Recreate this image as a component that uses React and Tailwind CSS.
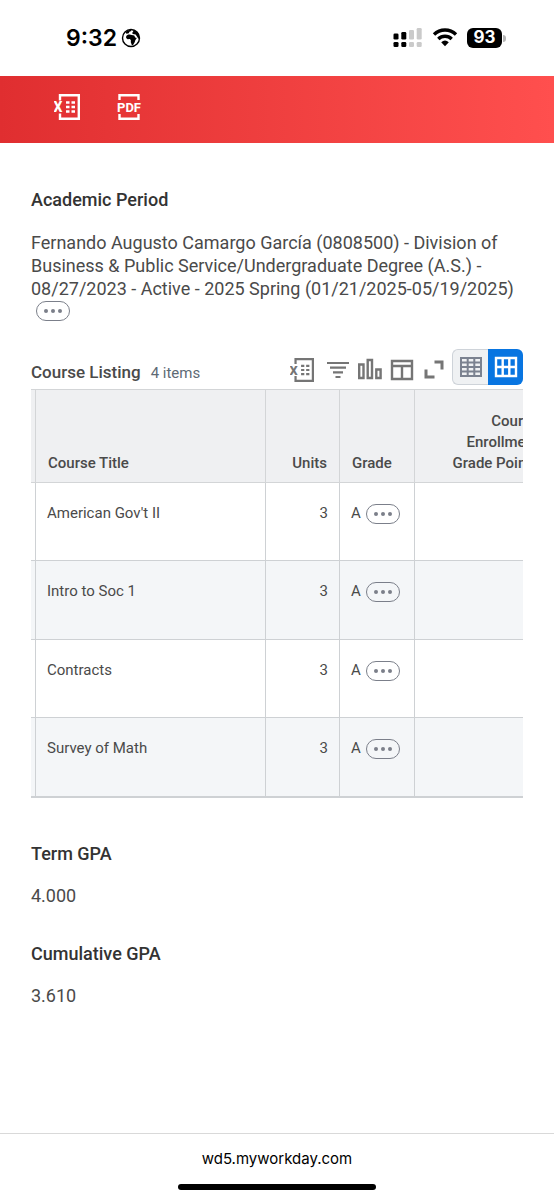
import React from 'react'
import { useState } from 'react';

const courses = [
    { title: "American Gov't II", units: 3, grade: 'A' },
    { title: 'Intro to Soc 1', units: 3, grade: 'A' },
    { title: 'Contracts', units: 3, grade: 'A' },
    { title: 'Survey of Math', units: 3, grade: 'A' },
];

function ExcelIcon({ className }) {
    return (
        <svg viewBox="0 0 26 26" className={className} fill="none" stroke="currentColor" strokeWidth="2.4">
            <path d="M6 6.500V1.200h18.800v23.600H6v-5.300" />
            <path d="M12 8.500h3.500M17.500 8.500H21M12 13h3.500M17.500 13H21M12 17.500h3.500M17.500 17.500H21" />
            <text x="-0.500" y="18" fontSize="14" fontWeight="800" fill="currentColor" stroke="none">X</text>
        </svg>
    )
}

function PdfIcon({ className }) {
    return (
        <svg viewBox="0 0 26 26" className={className} fill="none" stroke="currentColor" strokeWidth="2.4">
            <path d="M3.500 6V1.200h19V6M3.500 20v4.800h19V20" />
            <text x="13" y="17.500" fontSize="13" fontWeight="700" textAnchor="middle" fill="currentColor" stroke="none">PDF</text>
        </svg>
    )
}

function FilterIcon({ className }) {
    return (
        <svg viewBox="0 0 24 24" className={className} fill="none" stroke="currentColor" strokeWidth="2.2">
            <path d="M1 5h22M4 9.700h16M7 14.300h10M9.500 19h5" />
        </svg>
    )
}

function ChartIcon({ className }) {
    return (
        <svg viewBox="0 0 24 24" className={className} fill="none" stroke="currentColor" strokeWidth="2.4">
            <path d="M1.200 6.500h4.300V20H1.200zM9.700 2H14v18H9.700zM18.300 11.500h4.300V20h-4.300z" />
        </svg>
    )
}

function ColumnsIcon({ className }) {
    return (
        <svg viewBox="0 0 24 24" className={className} fill="none" stroke="currentColor" strokeWidth="2.4">
            <path d="M2 3h20v18H2zM2 8h20M12 8v13" />
        </svg>
    )
}

function ExpandIcon({ className }) {
    return (
        <svg viewBox="0 0 24 24" className={className} fill="none" stroke="currentColor" strokeWidth="3">
            <path d="M12.500 4h7.500v7.500M4 11.500V19h8.500" />
        </svg>
    )
}

function GridIcon({ className }) {
    return (
        <svg viewBox="0 0 24 24" className={className} fill="none" stroke="currentColor" strokeWidth="2">
            <path d="M2 3h20v18H2zM2 7.500h20M2 12h20M2 16.500h20M8.700 3v18M15.300 3v18" />
        </svg>
    )
}

function WideGridIcon({ className }) {
    return (
        <svg viewBox="0 0 24 24" className={className} fill="none" stroke="currentColor" strokeWidth="2.400">
            <path d="M2 3h20v18H2zM2 12h20M8.700 3v18M15.300 3v18" />
        </svg>
    )
}

function RelatedActions({ label }) {
    return (
        <button type="button" aria-label={label} className="flex h-5 w-[34px] shrink-0 items-center justify-center gap-[3px] rounded-full border border-[#7b7f8a]">
            <span className="size-1 rounded-full bg-[#7b7f8a]" />
            <span className="size-1 rounded-full bg-[#7b7f8a]" />
            <span className="size-1 rounded-full bg-[#7b7f8a]" />
        </button>
    )
}

function StatusBar() {
    return (
        <div className="flex h-[76px] items-center justify-between pr-12 pl-[66px] text-black">
            <div className="flex items-center gap-1 font-['Inter',sans-serif]">
                <span className="text-[23px] font-semibold">9:32</span>
                <svg viewBox="0 0 20 20" className="size-5">
                    <circle cx="10" cy="10" r="8.500" fill="none" stroke="currentColor" strokeWidth="1.400" />
                    <path d="M5.200 8.200C5.800 7 7 6.500 8.500 6.500l2.300.6 2.400.3 1 2.200 1.600.4-1.500 2.300-.6 2-1.600 2.600-1.300.2-1-2.800.1-2-1-1.200-2.300.1-1.500-1.300z" fill="currentColor" />
                    <path d="M4.500 4.500C6 2.600 8 1.700 10 1.700l.4 1.300-2 .8-.6 1.500-2.300.4z" fill="currentColor" />
                    <path d="M11.500 2c3.500.3 6 2.800 6.800 6.200l-.6 3-1.600-2.500-1.500-2.200-2.800-.4-.8-1.300 1.300-.8z" fill="currentColor" />
                </svg>
            </div>
            <div className="flex items-center gap-[9px]">
                <svg viewBox="0 0 30 20" className="h-5 w-[30px]">
                    <g fill="#000">
                        <rect x="0.500" y="5.500" width="5" height="6" rx="1.300" />
                        <rect x="8.300" y="4" width="5" height="7.500" rx="1.300" />
                        <rect x="0.500" y="14" width="5" height="5" rx="1.300" />
                        <rect x="8.300" y="14" width="5" height="5" rx="1.300" />
                    </g>
                    <g fill="#cacaca">
                        <rect x="16" y="2" width="5" height="9.500" rx="1.300" />
                        <rect x="23.700" y="0" width="5" height="11.500" rx="1.300" />
                        <rect x="16" y="14" width="5" height="5" rx="1.300" />
                        <rect x="23.700" y="14" width="5" height="5" rx="1.300" />
                    </g>
                </svg>
                <svg viewBox="0 0 26 20" className="h-5 w-[26px]" fill="none" stroke="currentColor" strokeWidth="3.400">
                    <path d="M2 6.500a15.800 15.800 0 0 1 22 0" />
                    <path d="M6.300 11a9.700 9.700 0 0 1 13.400 0" />
                    <path d="m9.200 14.300 3.800 4 3.800-4a5.700 5.700 0 0 0-7.600 0z" fill="currentColor" stroke="none" />
                </svg>
                <div className="flex items-center gap-px">
                    <span className="flex h-5 w-[35px] items-center justify-center rounded-md bg-black font-['Inter',sans-serif] text-[17px] font-bold text-white">93</span>
                    <span className="h-[7px] w-[3px] rounded-r-full bg-[#b5b5b5]" />
                </div>
            </div>
        </div>
    )
}

export default function App() {
    const [view, setView] = useState('wide');

    return (
        <div className="flex min-h-screen flex-col bg-white font-['Roboto',sans-serif] text-[#4a4a4a]">
            <StatusBar />

            {/* Export toolbar */}
            <header className="flex h-[67px] items-center gap-9 bg-linear-to-r from-[#e02e30] to-[#ff4f4e] pb-[6px] pl-[54px] text-white">
                <button type="button" aria-label="Export to Excel"><ExcelIcon className="size-[26px]" /></button>
                <button type="button" aria-label="Export to PDF"><PdfIcon className="size-[26px] overflow-visible" /></button>
            </header>

            <main className="flex-1 px-[31px] pt-[45px]">
                {/* Academic period */}
                <h2 className="text-lg leading-6 font-medium text-[#333]">Academic Period</h2>
                <p className="mt-[19px] text-lg leading-[23px]">
                    Fernando Augusto Camargo García (0808500) - Division of Business &amp; Public Service/Undergraduate Degree (A.S.) - 08/27/2023 - Active - 2025 Spring (01/21/2025-05/19/2025)
                </p>
                <div className="pt-px pl-[5px]">
                    <RelatedActions label="Related actions for academic period" />
                </div>

                {/* Course listing */}
                <section className="mt-7">
                    <div className="flex items-center justify-between pb-1">
                        <h3 className="flex items-baseline gap-[10px] pt-[10px] text-[17px] leading-6 font-medium">
                            Course Listing
                            <span className="text-[15px] font-normal text-[#5e6a75]">4 items</span>
                        </h3>
                        <div className="flex items-center gap-[6px] text-[#757575]">
                            <div className="flex items-center gap-2 pt-[6px]">
                                <button type="button" aria-label="Export to Excel" className="pr-1"><ExcelIcon className="size-6" /></button>
                                <button type="button" aria-label="Filter"><FilterIcon className="size-6" /></button>
                                <button type="button" aria-label="Chart"><ChartIcon className="size-6" /></button>
                                <button type="button" aria-label="Column preferences"><ColumnsIcon className="size-6" /></button>
                                <button type="button" aria-label="Expand"><ExpandIcon className="size-6" /></button>
                            </div>
                            <div className="flex">
                                <button
                                    type="button"
                                    aria-label="Compact grid"
                                    aria-pressed={view === 'compact'}
                                    onClick={() => setView('compact')}
                                    className="flex h-9 w-9 items-center justify-center rounded-l-md border border-r-0 border-[#ced3d9] bg-[#eff1f3] text-[#7b8290]"
                                >
                                    <GridIcon className="size-6" />
                                </button>
                                <button
                                    type="button"
                                    aria-label="Wide grid"
                                    aria-pressed={view === 'wide'}
                                    onClick={() => setView('wide')}
                                    className="flex h-9 w-[35px] items-center justify-center rounded-r-md bg-[#0875e1] text-white"
                                >
                                    <WideGridIcon className="size-6" />
                                </button>
                            </div>
                        </div>
                    </div>

                    <div className="overflow-x-auto [scrollbar-width:none]">
                        <table className="w-[520px] table-fixed border-separate border-spacing-0 border-b border-[#ced1d4] text-[15px] leading-[21px]">
                            <thead>
                                <tr className="h-[94px] bg-[#eff0f2] align-bottom *:border-y *:border-[#d3d5d7] *:pb-2 *:font-medium">
                                    <td className="w-[5px] border-r" />
                                    <th scope="col" className="w-[230px] border-r pl-3 text-left">Course Title</th>
                                    <th scope="col" className="w-[74px] border-r pr-3 text-right">Units</th>
                                    <th scope="col" className="w-[75px] border-r pl-3 text-left">Grade</th>
                                    <th scope="col" className="pr-3 text-right">Course<br />Enrollment<br />Grade Points</th>
                                </tr>
                            </thead>
                            <tbody>
                                {courses.map((course) => (
                                    <tr key={course.title} className="h-[78px] align-top even:h-[79px] even:bg-[#f4f6f8] *:border-b *:border-[#ced1d4] *:pt-5">
                                        <td className="border-r" />
                                        <td className="border-r pl-[11px]">{course.title}</td>
                                        <td className="border-r pr-[11px] text-right">{course.units}</td>
                                        <td className="border-r pl-[11px]">
                                            <div className="flex items-center gap-[5px]">
                                                {course.grade}
                                                <RelatedActions label={`Related actions for ${course.title}`} />
                                            </div>
                                        </td>
                                        <td />
                                    </tr>
                                ))}
                            </tbody>
                        </table>
                    </div>
                </section>

                {/* GPA totals */}
                <dl className="mt-11 text-lg leading-6">
                    <dt className="font-medium text-[#333]">Term GPA</dt>
                    <dd className="mt-[18px]">4.000</dd>
                    <dt className="mt-[34px] font-medium text-[#333]">Cumulative GPA</dt>
                    <dd className="mt-[18px]">3.610</dd>
                </dl>
            </main>

            {/* Browser address bar */}
            <footer className="flex flex-col items-center border-t border-[#d9d9d9] pt-[13px] pb-[10px] text-black">
                <a href="#" className="font-['Inter',sans-serif] text-[15px] leading-6">wd5.myworkday.com</a>
                <div className="mt-[13px] h-[6px] w-[198px] rounded-full bg-black" />
            </footer>
        </div>
    )
}
